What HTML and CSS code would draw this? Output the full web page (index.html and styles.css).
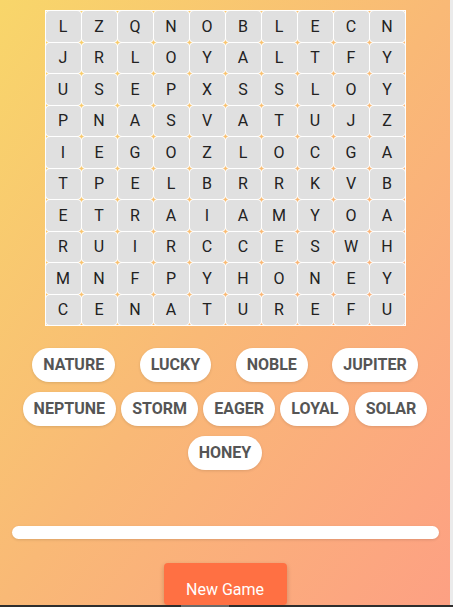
FILE: index.html
```html
<!DOCTYPE html>
<html lang="en">
<head>
<meta charset="utf-8">
<title>Word Search</title>
<link rel="stylesheet" href="styles.css">
</head>
<body>
<div class="screen">
  <div class="top">
    <main class="app">
      <div class="grid">
        <div class="cell">L</div><div class="cell">Z</div><div class="cell">Q</div><div class="cell">N</div><div class="cell">O</div><div class="cell">B</div><div class="cell">L</div><div class="cell">E</div><div class="cell">C</div><div class="cell">N</div>
        <div class="cell">J</div><div class="cell">R</div><div class="cell">L</div><div class="cell">O</div><div class="cell">Y</div><div class="cell">A</div><div class="cell">L</div><div class="cell">T</div><div class="cell">F</div><div class="cell">Y</div>
        <div class="cell">U</div><div class="cell">S</div><div class="cell">E</div><div class="cell">P</div><div class="cell">X</div><div class="cell">S</div><div class="cell">S</div><div class="cell">L</div><div class="cell">O</div><div class="cell">Y</div>
        <div class="cell">P</div><div class="cell">N</div><div class="cell">A</div><div class="cell">S</div><div class="cell">V</div><div class="cell">A</div><div class="cell">T</div><div class="cell">U</div><div class="cell">J</div><div class="cell">Z</div>
        <div class="cell">I</div><div class="cell">E</div><div class="cell">G</div><div class="cell">O</div><div class="cell">Z</div><div class="cell">L</div><div class="cell">O</div><div class="cell">C</div><div class="cell">G</div><div class="cell">A</div>
        <div class="cell">T</div><div class="cell">P</div><div class="cell">E</div><div class="cell">L</div><div class="cell">B</div><div class="cell">R</div><div class="cell">R</div><div class="cell">K</div><div class="cell">V</div><div class="cell">B</div>
        <div class="cell">E</div><div class="cell">T</div><div class="cell">R</div><div class="cell">A</div><div class="cell">I</div><div class="cell">A</div><div class="cell">M</div><div class="cell">Y</div><div class="cell">O</div><div class="cell">A</div>
        <div class="cell">R</div><div class="cell">U</div><div class="cell">I</div><div class="cell">R</div><div class="cell">C</div><div class="cell">C</div><div class="cell">E</div><div class="cell">S</div><div class="cell">W</div><div class="cell">H</div>
        <div class="cell">M</div><div class="cell">N</div><div class="cell">F</div><div class="cell">P</div><div class="cell">Y</div><div class="cell">H</div><div class="cell">O</div><div class="cell">N</div><div class="cell">E</div><div class="cell">Y</div>
        <div class="cell">C</div><div class="cell">E</div><div class="cell">N</div><div class="cell">A</div><div class="cell">T</div><div class="cell">U</div><div class="cell">R</div><div class="cell">E</div><div class="cell">F</div><div class="cell">U</div>
      </div>
      <div class="words">
        <span class="chip">NATURE</span>
        <span class="chip">LUCKY</span>
        <span class="chip">NOBLE</span>
        <span class="chip">JUPITER</span>
        <span class="chip">NEPTUNE</span>
        <span class="chip">STORM</span>
        <span class="chip">EAGER</span>
        <span class="chip">LOYAL</span>
        <span class="chip">SOLAR</span>
        <span class="chip">HONEY</span>
      </div>
      <div class="progress"><div class="progress-fill" style="width:0%"></div></div>
      <button class="new-game">New Game</button>
    </main>
    <div class="vtrack"></div>
  </div>
  <div class="htrack"><div class="hthumb"></div></div>
</div>
</body>
</html>
```
FILE: styles.css
```css
* { box-sizing: border-box; }
html, body { margin: 0; padding: 0; }
body {
  width: 453px;
  height: 607px;
  overflow: hidden;
  font-family: Roboto, "Liberation Sans", sans-serif;
  background: #e9e9e9;
}
.screen { display: flex; flex-direction: column; }
.top { display: flex; height: 605px; }
.vtrack { width: 3px; background: #ebebeb; }
.htrack {
  height: 2px;
  background: #2e2e2e;
  display: flex;
}
.hthumb { margin-left: 181px; width: 48px; background: #6a6a6a; }
.app {
  width: 450px;
  height: 605px;
  overflow: hidden;
  background: linear-gradient(to bottom right, #f8d66a 0%, #f9b976 50%, #fda083 100%);
  display: flex;
  flex-direction: column;
  align-items: center;
  padding-top: 10px;
}
.grid {
  display: grid;
  grid-template-columns: repeat(10, 35px);
  grid-auto-rows: 30.5px;
  gap: 1px;
  border: 1px solid #fff;
}
.cell {
  background: #e0e0e0;
  border-radius: 4px;
  box-shadow: 0 0 0 1px #fff;
  display: flex;
  align-items: center;
  justify-content: center;
  font-size: 16px;
  color: #222;
}
.words {
  width: 450px;
  margin-top: 17px;
  padding: 0 20px;
  display: flex;
  flex-wrap: wrap;
  justify-content: space-around;
}
.chip {
  margin: 5px 2.5px;
  padding: 7px 11px;
  background: #fff;
  border-radius: 17px;
  font-size: 16px;
  line-height: 20px;
  font-weight: 700;
  color: #555;
  box-shadow: 0 1px 3px rgba(0, 0, 0, 0.12);
}
.progress {
  width: 427px;
  height: 20px;
  margin-top: 51px;
  background: #fff;
  border-radius: 8px;
  box-shadow: 0 1px 3px rgba(0, 0, 0, 0.12);
  overflow: hidden;
}
.progress-fill { height: 100%; background: #ff7043; }
.new-game {
  margin-top: 24px;
  flex-shrink: 0;
  width: 123px;
  height: 42px;
  padding: 10px 0 0;
  align-self: center;
  display: block;
  border: none;
  border-radius: 4px;
  background: #ff7043;
  color: #fff;
  font-family: Roboto, "Liberation Sans", sans-serif;
  font-size: 16px;
  line-height: 19px;
  text-align: center;
  vertical-align: top;
  box-shadow: 0 2px 5px rgba(0, 0, 0, 0.2);
}
```
